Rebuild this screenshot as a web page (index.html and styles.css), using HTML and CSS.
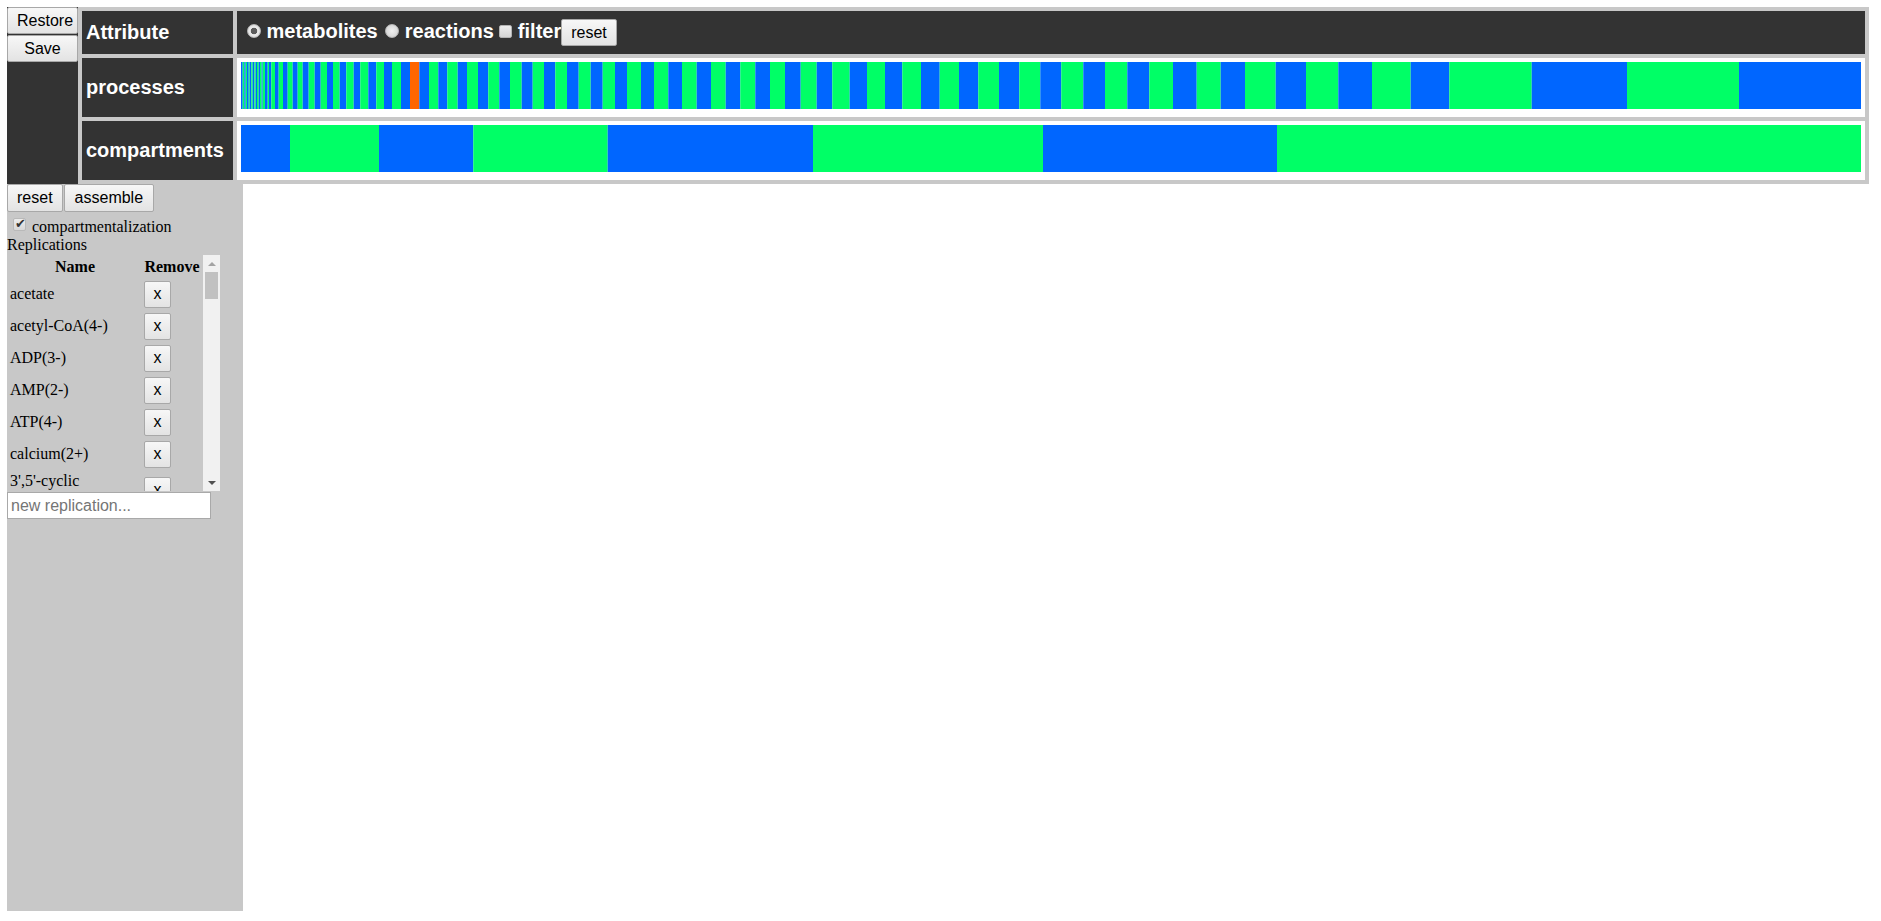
FILE: index.html
```html
<html>
<head>
<title>Model assembly</title>
<link rel="stylesheet" href="styles.css">
</head>
<body>

<div class="top">
	<div class="top-left">
		<button class="btn wide" id="restore">Restore</button>
		<button class="btn wide" id="save">Save</button>
	</div>
	<div class="attr-grid">
		<div class="label">Attribute</div>
		<div class="controls">
			<input type="radio" class="radio" name="attr" checked> metabolites <input type="radio" class="radio" name="attr"> reactions <input type="checkbox" class="check"> filter<button class="btn">reset</button>
		</div>
		<div class="label">processes</div>
		<div class="track"><svg class="bar" id="processes" width="1620" height="47"></svg></div>
		<div class="label">compartments</div>
		<div class="track"><svg class="bar" id="compartments" width="1620" height="47"></svg></div>
	</div>
</div>

<div class="lower">
	<div class="sidebar">
		<div class="actions">
			<button class="btn">reset</button><button class="btn assemble">assemble</button>
		</div>
		<div class="opt"><input type="checkbox" class="tick" checked> compartmentalization</div>
		<div class="heading">Replications</div>
		<div class="list">
			<div class="list-view">
				<table class="repl">
					<thead><tr><th>Name</th><th class="col-remove">Remove</th></tr></thead>
					<tbody id="rows"></tbody>
				</table>
			</div>
			<div class="scrollbar">
				<div class="sb-btn up"></div>
				<div class="sb-track"><div class="sb-thumb"></div></div>
				<div class="sb-btn down"></div>
			</div>
		</div>
		<input type="text" class="new" placeholder="new replication...">
	</div>
</div>

<script type="text/javascript">

var blue = '#0066ff', green = '#00ff66', orange = '#ff6600';
var left = 241;

// edges of each segment, in page pixels
var processEdges = [241, 242.7, 244.3, 245.7, 247, 248.7, 249.7, 251.3, 252.7, 254.3, 255.7, 257, 258.7, 260, 261.7, 262.7,
	265, 267.7, 269, 271.3, 275, 278.7, 283, 287.7, 292.7, 297.7, 302.7, 308.7, 314.7, 320.7, 327, 333, 339.7, 346.3,
	353.7, 360.3, 368.3, 376.3, 384, 392, 401, 410, 419.3, 429, 438.3, 447.3, 457.7, 467, 478, 488.3, 499.3, 510, 521.7,
	532.7, 544, 555.3, 567, 578.7, 590.7, 602.7, 615, 627, 641, 654, 668.3, 682, 696.7, 711, 725.7, 740.3, 755.3, 770,
	785, 800.7, 816.7, 832.3, 849.7, 867, 885, 902.3, 921, 939.7, 959, 978.3, 999, 1019.3, 1040.3, 1061.3, 1083.3, 1105,
	1127.3, 1149.3, 1173, 1196.7, 1220.7, 1245, 1275.7, 1306, 1338.3, 1372, 1410.7, 1449.3, 1531.7, 1627, 1739, 1861];
var compartmentEdges = [241, 290, 379, 473.3, 607.7, 813, 1043, 1277, 1861];

function drawBar(id, edges, selected) {
	var svg = document.getElementById(id);
	for (var i = 0; i < edges.length - 1; i++) {
		var r = document.createElementNS('http://www.w3.org/2000/svg', 'rect');
		r.setAttribute('x', edges[i] - left);
		r.setAttribute('y', 0);
		r.setAttribute('width', edges[i + 1] - edges[i]);
		r.setAttribute('height', 47);
		r.setAttribute('fill', i == selected ? orange : (i % 2 ? green : blue));
		svg.appendChild(r);
	}
}

drawBar('processes', processEdges, 41);
drawBar('compartments', compartmentEdges, -1);

// only the rows that fit in the list box
var names = ["acetate", "acetyl-CoA(4-)", "ADP(3-)", "AMP(2-)", "ATP(4-)", "calcium(2+)", "3',5'-cyclic AMP(1-)"];

var rows = '';
for (var i = 0; i < names.length; i++) {
	rows += '<tr><td>' + names[i] + '</td><td><button class="btn remove">x</button></td></tr>';
}
document.getElementById('rows').innerHTML = rows;
</script>

</body>
</html>
```

FILE: styles.css
```css
body{margin:7px;background:#fff;color:#000;font-family:"Liberation Serif","Times New Roman",serif;font-size:16px;}

.btn{font-family:"Liberation Sans",Arial,sans-serif;font-size:16px;color:#000;background:linear-gradient(#f7f7f7,#e3e3e3);border:1px solid #a8a8a8;border-radius:2px;height:27px;padding:0 9px;margin:0;white-space:nowrap;vertical-align:baseline;}
.btn.wide{width:71px;}
#restore{margin-bottom:1px;}
.btn.assemble{padding:0 10px;}

.top{display:flex;width:1862px;height:177px;background:#c8c8c8;}
.top-left{width:71px;background:#333;display:flex;flex-direction:column;align-items:flex-start;}
.attr-grid{flex:1;display:grid;grid-template-columns:151px 1fr;grid-template-rows:43px 59px 59px;gap:4px;padding:4px;}
.label{background:#333;color:#fff;font:bold 20px "Liberation Sans",Arial,sans-serif;display:flex;align-items:center;padding-left:4px;}
.controls{background:#333;color:#fff;font:bold 20px "Liberation Sans",Arial,sans-serif;padding:8px 0 0 8px;white-space:nowrap;}
.track{background:#fff;padding:4px;}
.bar{display:block;}

.radio{-webkit-appearance:none;appearance:none;width:14px;height:14px;margin:0 0 0 2px;border-radius:50%;border:1px solid #b8b8b8;background:radial-gradient(circle,#f0f0f0 0,#d6d6d6 75%);vertical-align:baseline;}
.radio:checked{background:radial-gradient(circle,#5c5c5c 0,#5c5c5c 3px,#ececec 3.6px,#d8d8d8 100%);}
.check{-webkit-appearance:none;appearance:none;width:13px;height:13px;margin:0;border:1px solid #b3b3b3;border-radius:2px;background:linear-gradient(#ececec,#d4d4d4);vertical-align:baseline;}

.lower{display:flex;}
.sidebar{width:236px;height:727px;background:#c8c8c8;}
.actions{display:flex;gap:1px;}
.actions .btn{height:28px;}
.opt{height:18px;padding-top:6px;line-height:18px;}
.tick{-webkit-appearance:none;appearance:none;position:relative;width:13px;height:13px;margin:0 2px 1px 6px;border:1px solid #b9b9b9;border-radius:2px;background:linear-gradient(#ececec,#d8d8d8);vertical-align:baseline;}
.tick:checked::after{content:"\2714";position:absolute;left:1px;top:-3px;font:13px "DejaVu Sans",sans-serif;color:#333;}
.heading{line-height:18px;}

.list{display:flex;margin-top:1px;width:213px;height:236px;}
.list-view{flex:1;overflow:hidden;}
.scrollbar{width:17px;display:flex;flex-direction:column;background:#f1f1f1;}
.sb-btn{height:17px;display:flex;align-items:center;justify-content:center;}
.sb-btn.up::before{content:"";border-left:4px solid transparent;border-right:4px solid transparent;border-bottom:4px solid #a3a3a3;}
.sb-btn.down::before{content:"";border-left:4px solid transparent;border-right:4px solid transparent;border-top:4px solid #505050;}
.sb-track{flex:1;}
.sb-thumb{height:27px;margin:0 2px;background:#c1c1c1;}

.repl{width:100%;table-layout:fixed;border-spacing:2px;}
.repl th,.repl td{padding:1px;font-size:16px;}
.repl td{height:30px;vertical-align:middle;}
.col-remove{width:56px;}
.btn.remove{width:27px;height:27px;padding:0;}

.new{display:block;box-sizing:border-box;width:204px;height:27px;margin:1px 0 0 0;padding:0 3px;border:1px solid #a9a9a9;font:16px "Liberation Sans",Arial,sans-serif;background:#fff;}
.new::placeholder{color:#757575;}
```
